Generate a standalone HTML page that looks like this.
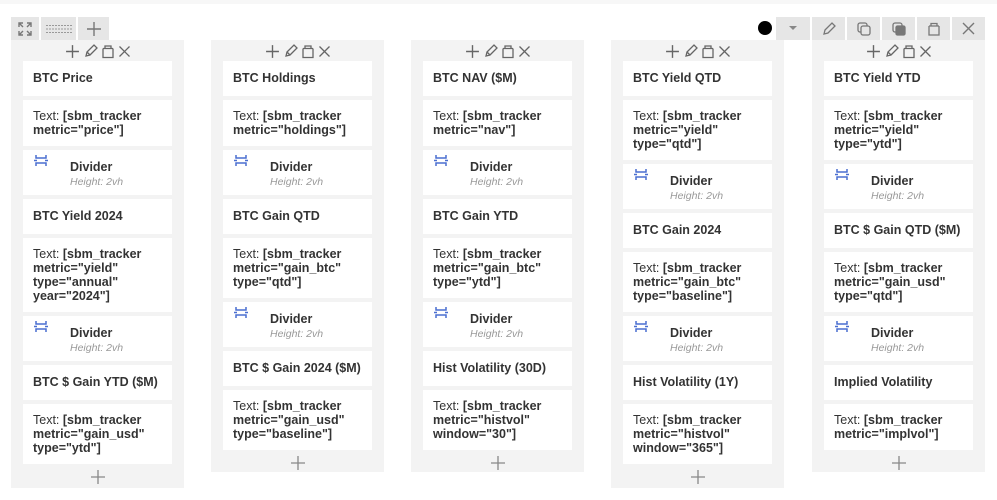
<!DOCTYPE html>
<html><head><meta charset="utf-8"><style>
*{box-sizing:border-box;margin:0;padding:0}
body{width:997px;height:500px;background:#fff;font-family:"Liberation Sans",Arial,sans-serif;color:#333;position:relative;overflow:hidden}
.topbar{position:absolute;left:0;top:0;width:997px;height:4px;background:#f7f7f7}
.btn{position:absolute;top:17px;height:23px;background:#e6e6e6;display:flex;align-items:center;justify-content:center;color:#666}
.col{position:absolute;top:40px;width:173px;background:#f3f3f3;padding:0 12px}
.hdr{height:21px;display:flex;justify-content:center;align-items:center;gap:4px;padding-top:1px}
.card{background:#fff;margin-bottom:4px;font-size:12.5px;line-height:14px;padding:10px 10px 0 10px}
.t{height:35px;font-weight:bold}
.x{padding-top:9px}
.x b{font-weight:bold}
.d{height:45px;position:relative}
.d svg{position:absolute;left:10px;top:4px}
.d .n{position:absolute;left:47px;top:10px;font-weight:bold}
.d .h{position:absolute;left:47px;top:25px;font-style:italic;color:#999;font-size:10.5px}
.plus{height:18px;display:flex;justify-content:center;align-items:center}
</style></head><body>
<div class="topbar"></div>
<div class="btn" style="left:11px;width:28px"><svg width="14" height="14" viewBox="0 0 14 14" fill="none" stroke="#777" stroke-width="1.4"><path d="M1 5V1h4M1 1l4 4M13 9v4H9M13 13L9 9M9 1h4v4M13 1L9 5M5 13H1V9M1 13l4-4"/></svg></div>
<div class="btn" style="left:41px;width:35px"><svg width="26" height="10" viewBox="0 0 26 10" stroke="#999" stroke-width="1" stroke-dasharray="2 1"><path d="M0 1.5h26M0 5h26M0 8.5h26"/></svg></div>
<div class="btn" style="left:78px;width:31px"><svg width="14" height="14" viewBox="0 0 14 14" stroke="#777" stroke-width="1.4"><path d="M7 0v14M0 7h14"/></svg></div>
<div style="position:absolute;left:758px;top:21px;width:14px;height:14px;border-radius:50%;background:#000"></div>
<div class="btn" style="left:776px;width:34px"><svg width="8" height="5"><path d="M0 0h8L4 4z" fill="#888"/></svg></div>
<div class="btn" style="left:812px;width:33px"><svg width="14" height="14" viewBox="0 0 14 14" fill="none" stroke="#777" stroke-width="1.3"><path d="M2 12l1-4 7-7 3 3-7 7z"/></svg></div>
<div class="btn" style="left:847px;width:33px"><svg width="14" height="14" viewBox="0 0 14 14" fill="none" stroke="#777" stroke-width="1.3"><rect x="1" y="1" width="9" height="9" rx="2"/><rect x="4" y="4" width="9" height="9" rx="2" fill="#e6e6e6"/></svg></div>
<div class="btn" style="left:882px;width:33px"><svg width="14" height="14" viewBox="0 0 14 14" fill="none" stroke="#777" stroke-width="1.3"><rect x="1" y="1" width="9" height="9" rx="2"/><rect x="4" y="4" width="9" height="9" rx="1.5" fill="#777"/></svg></div>
<div class="btn" style="left:917px;width:33px"><svg width="12" height="14" viewBox="0 0 12 14" fill="none" stroke="#777" stroke-width="1.3"><path d="M1 4h10M3 4V1.5h6V4M1 4v9h10V4"/></svg></div>
<div class="btn" style="left:952px;width:33px"><svg width="13" height="13" viewBox="0 0 13 13" stroke="#777" stroke-width="1.4"><path d="M1 1l11 11M12 1L1 12"/></svg></div>

<div class="col" style="left:11px;height:448px">
<div class="hdr">ICONS</div>
<div class="card t">BTC Price</div>
<div class="card x" style="height:46px">Text: <b>[sbm_tracker<br>metric="price"]</b></div>
<div class="card d">DIV</div>
<div class="card t">BTC Yield 2024</div>
<div class="card x" style="height:74px">Text: <b>[sbm_tracker<br>metric="yield"<br>type="annual"<br>year="2024"]</b></div>
<div class="card d">DIV</div>
<div class="card t">BTC $ Gain YTD ($M)</div>
<div class="card x" style="height:60px">Text: <b>[sbm_tracker<br>metric="gain_usd"<br>type="ytd"]</b></div>
<div class="plus">PLUS</div>
</div>

<div class="col" style="left:211px;height:432px">
<div class="hdr">ICONS</div>
<div class="card t">BTC Holdings</div>
<div class="card x" style="height:46px">Text: <b>[sbm_tracker<br>metric="holdings"]</b></div>
<div class="card d">DIV</div>
<div class="card t">BTC Gain QTD</div>
<div class="card x" style="height:60px">Text: <b>[sbm_tracker<br>metric="gain_btc"<br>type="qtd"]</b></div>
<div class="card d">DIV</div>
<div class="card t">BTC $ Gain 2024 ($M)</div>
<div class="card x" style="height:60px">Text: <b>[sbm_tracker<br>metric="gain_usd"<br>type="baseline"]</b></div>
<div class="plus">PLUS</div>
</div>

<div class="col" style="left:411px;height:432px">
<div class="hdr">ICONS</div>
<div class="card t">BTC NAV ($M)</div>
<div class="card x" style="height:46px">Text: <b>[sbm_tracker<br>metric="nav"]</b></div>
<div class="card d">DIV</div>
<div class="card t">BTC Gain YTD</div>
<div class="card x" style="height:60px">Text: <b>[sbm_tracker<br>metric="gain_btc"<br>type="ytd"]</b></div>
<div class="card d">DIV</div>
<div class="card t">Hist Volatility (30D)</div>
<div class="card x" style="height:60px">Text: <b>[sbm_tracker<br>metric="histvol"<br>window="30"]</b></div>
<div class="plus">PLUS</div>
</div>

<div class="col" style="left:611px;height:448px">
<div class="hdr">ICONS</div>
<div class="card t">BTC Yield QTD</div>
<div class="card x" style="height:60px">Text: <b>[sbm_tracker<br>metric="yield"<br>type="qtd"]</b></div>
<div class="card d">DIV</div>
<div class="card t">BTC Gain 2024</div>
<div class="card x" style="height:60px">Text: <b>[sbm_tracker<br>metric="gain_btc"<br>type="baseline"]</b></div>
<div class="card d">DIV</div>
<div class="card t">Hist Volatility (1Y)</div>
<div class="card x" style="height:60px">Text: <b>[sbm_tracker<br>metric="histvol"<br>window="365"]</b></div>
<div class="plus">PLUS</div>
</div>

<div class="col" style="left:812px;height:432px">
<div class="hdr">ICONS</div>
<div class="card t">BTC Yield YTD</div>
<div class="card x" style="height:60px">Text: <b>[sbm_tracker<br>metric="yield"<br>type="ytd"]</b></div>
<div class="card d">DIV</div>
<div class="card t">BTC $ Gain QTD ($M)</div>
<div class="card x" style="height:60px">Text: <b>[sbm_tracker<br>metric="gain_usd"<br>type="qtd"]</b></div>
<div class="card d">DIV</div>
<div class="card t">Implied Volatility</div>
<div class="card x" style="height:46px">Text: <b>[sbm_tracker<br>metric="implvol"]</b></div>
<div class="plus">PLUS</div>
</div>

<script>
var icons='<svg width="15" height="15" viewBox="0 0 14 14" stroke="#666" stroke-width="1.3"><path d="M7 1v12M1 7h12"/></svg><svg width="14" height="14" viewBox="0 0 14 14" fill="none" stroke="#666" stroke-width="1.3"><path d="M2 12l1-4 7-7 3 3-7 7zM3 8l3 3"/></svg><svg width="12" height="15" viewBox="0 0 12 14" fill="none" stroke="#666" stroke-width="1.3"><path d="M1 4h10M3 4V1.5h6V4M1 4v9h10V4"/></svg><svg width="13" height="13" viewBox="0 0 13 13" stroke="#666" stroke-width="1.3"><path d="M1.5 1.5l10 10M11.5 1.5l-10 10"/></svg>';
var div='<svg width="16" height="13" viewBox="0 0 16 13" fill="none" stroke="#4a6fd0" stroke-width="1.5"><path d="M3 1v3h10V1M3 12V9h10v3M1 6.5h3M12 6.5h3"/></svg><div class="n">Divider</div><div class="h">Height: 2vh</div>';
var plus='<svg width="14" height="14" viewBox="0 0 14 14" stroke="#888" stroke-width="1.3"><path d="M7 0v14M0 7h14"/></svg>';
document.querySelectorAll('.hdr').forEach(e=>e.innerHTML=icons);
document.querySelectorAll('.d').forEach(e=>e.innerHTML=div);
document.querySelectorAll('.plus').forEach(e=>e.innerHTML=plus);
</script>
</body></html>
